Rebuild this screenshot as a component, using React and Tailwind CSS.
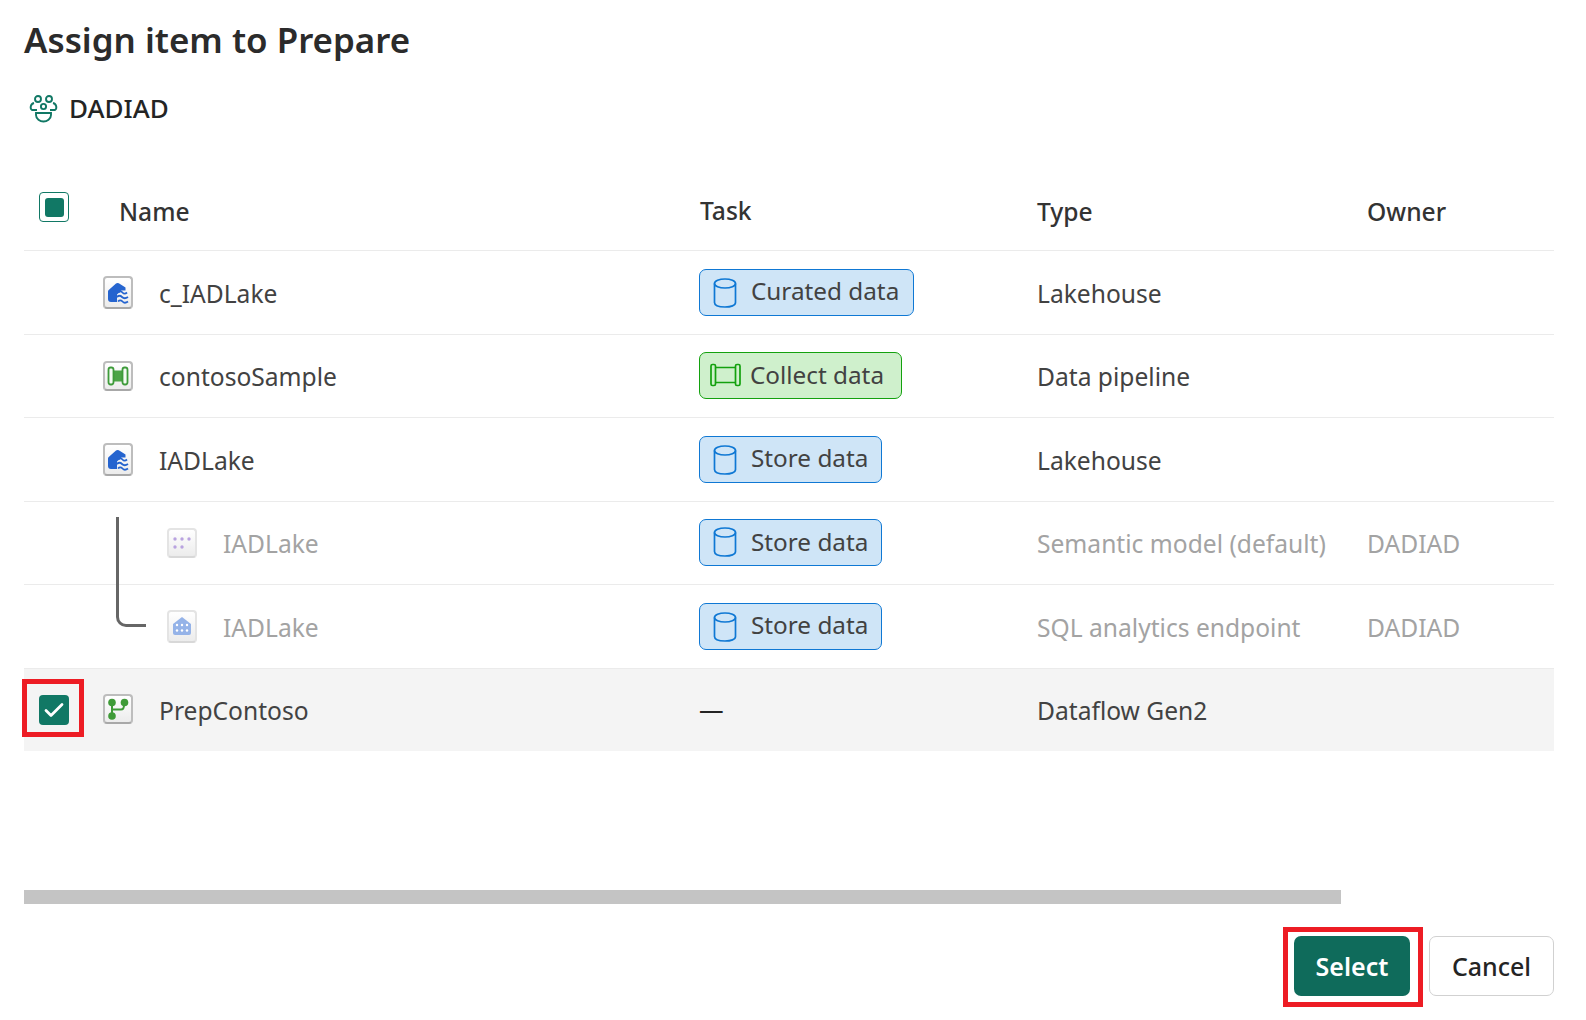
const font = "font-['Noto_Sans','Open_Sans',sans-serif]";

function IconBox({ children, faded, tall }) {
  return (
    <div className={`w-[30px] ${tall ? "h-[33px]" : "h-[30px]"} shrink-0 rounded-[4px] border-2 ${faded ? "border-[#e4e4e4] border-b-[#d8d8d8]" : "border-[#bdbdbd] border-b-[#a8a8a8]"} bg-gradient-to-b from-white to-[#ececec] flex items-center justify-center`}>
      {children}
    </div>
  );
}

const Lake = () => (
  <svg width="23" height="23" viewBox="0 0 23 23">
    <path d="M1 10.5 Q1 9.5 2 8.7 L9 2.5 Q10.3 1.5 11.8 2.3 L18.5 6.5 V9.5 H14.5 L10 13.5 V21 H4 Q1 21 1 18 Z" fill="#2564cf" />
    <path d="M11.5 11.5 q2 -2.4 4 0 q2 2.4 4.5 0 M10 16 q2.5 -2.4 5 0 q2.5 2.4 6 0 M11 20.5 q2.2 -2.4 4.5 0 q2.2 2.4 5.5 0" fill="none" stroke="#2564cf" strokeWidth="1.8" />
  </svg>
);
const Pipe = () => (
  <svg width="22" height="20" viewBox="0 0 22 20">
    <rect x="6" y="4.5" width="10" height="11" fill="#4ba446" />
    <rect x="1.5" y="1.5" width="5" height="17" rx="2.2" fill="#f4fbf3" stroke="#3e9b3a" strokeWidth="1.8" />
    <rect x="15.5" y="1.5" width="5" height="17" rx="2.2" fill="#f4fbf3" stroke="#3e9b3a" strokeWidth="1.8" />
  </svg>
);
const Dots = () => (
  <svg width="20" height="18" viewBox="0 0 20 18" fill="#b9a3e0">
    {[3, 10, 17].map((x) => <circle key={x} cx={x} cy="5" r="1.7" />)}
    {[3, 10].map((x) => <circle key={x} cx={x} cy="13" r="1.7" />)}
  </svg>
);
const Sql = () => (
  <svg width="22" height="22" viewBox="0 0 22 22">
    <path d="M2 9 L11 2 L20 9 V18 Q20 20 18 20 H4 Q2 20 2 18 Z" fill="#95b3e8" />
    <g fill="#ffffff">
      {[6, 11, 16].map((x) => <circle key={x} cx={x} cy="10" r="1.2" />)}
      {[6, 11, 16].map((x) => <circle key={x} cx={x} cy="15.5" r="1.2" />)}
    </g>
  </svg>
);
const Flow = () => (
  <svg width="24" height="24" viewBox="0 0 24 24" fill="#3f9b38" stroke="#3f9b38">
    <circle cx="6" cy="5.5" r="3.8" stroke="none" />
    <circle cx="18.5" cy="5.5" r="3.8" stroke="none" />
    <circle cx="6" cy="19" r="3.8" stroke="none" />
    <path d="M6 8 V17 M6 12.5 H15 Q18 12.5 18 8" fill="none" strokeWidth="2" />
  </svg>
);

const Cylinder = () => (
  <svg width="24" height="30" viewBox="0 0 24 30" fill="none" stroke="#0f78d4" strokeWidth="1.7" className="shrink-0">
    <ellipse cx="12" cy="5.5" rx="10.5" ry="4.5" />
    <path d="M1.5 5.5 V24.5 C1.5 27.5 6 29 12 29 S22.5 27.5 22.5 24.5 V5.5" />
  </svg>
);
const Roller = () => (
  <svg width="31" height="24" viewBox="0 0 31 24" fill="none" stroke="#13a10e" strokeWidth="1.7" className="shrink-0">
    <rect x="1" y="1.5" width="4.5" height="21" rx="1.5" />
    <rect x="25.5" y="1.5" width="4.5" height="21" rx="1.5" />
    <path d="M5.5 4.5 H25.5 M5.5 19.5 H25.5" />
  </svg>
);

function Pill({ label, green, w, tall }) {
  return (
    <div className={`${w} h-[47px] ${tall ? "" : "mt-[-2px]"} rounded-[7px] border flex items-center ${green ? "bg-[#cff0cc] border-[#13a10e] pl-[10px] gap-[9px]" : "bg-[#cfe5f7] border-[#0f78d4] pl-[13px] gap-[14px]"}`}>
      {green ? <Roller /> : <Cylinder />}
      <span className={`text-[24.3px] leading-none text-[#424242] ${tall ? "pb-[2px]" : ""}`}>{label}</span>
    </div>
  );
}

function Row({ h, icon, tall, name, child, task, type, owner, selected }) {
  const tone = child ? "text-[#a3a3a3]" : "text-[#424242]";
  return (
    <div className={`${h} flex items-center border-b ${selected ? "bg-[#f4f4f4] border-transparent" : "border-[#ebebeb]"}`}>
      <div className="w-[79px] shrink-0 flex pl-[15px] items-center">
        {selected && (
          <div className="w-[30px] h-[30px] rounded-[4px] bg-[#117865] flex items-center justify-center">
            <svg width="20" height="16" viewBox="0 0 20 16" fill="none" stroke="#ffffff" strokeWidth="2.8" strokeLinecap="round" strokeLinejoin="round"><path d="M2 8.5 L7 13.5 L18 2.5" /></svg>
          </div>
        )}
      </div>
      <div className={`w-[596px] shrink-0 flex items-center ${child ? "pl-[64px] gap-[26px]" : "gap-[26px]"}`}>
        <IconBox faded={child} tall={tall}>{icon}</IconBox>
        <span className={`text-[24.6px] pt-[3px] ${tone}`}>{name}</span>
      </div>
      <div className="w-[338px] shrink-0">{task}</div>
      <div className={`w-[330px] shrink-0 text-[24.6px] pt-[3px] ${tone}`}>{type}</div>
      <div className={`text-[24.6px] pt-[3px] ${tone}`}>{owner}</div>
    </div>
  );
}

export default function App() {
  return (
    <div className={`${font} w-[1586px] h-[1020px] bg-white pl-[24px] pr-[32px] overflow-hidden`}>
      <h1 className="h-[80px] flex items-center text-[34.9px] font-semibold text-[#2b2b2b]">Assign item to Prepare</h1>
      <div className="h-[58px] flex items-center gap-[11px] pl-[5px] pb-[2px]">
        <svg width="29" height="29" viewBox="0 0 29 29" fill="none" stroke="#117865" strokeWidth="1.9">
          <circle cx="9" cy="5" r="3" />
          <circle cx="20" cy="5" r="3" />
          <circle cx="14.5" cy="12.5" r="2.6" />
          <path d="M5 9 C1 10 1 15 3 16 H8 M24 9 C28 10 28 15 26 16 H21" />
          <path d="M7 19 H22 V21 C22 25 18 27.5 14.5 27.5 S7 25 7 21 Z" />
        </svg>
        <span className="text-[26px] font-medium text-[#242424]">DADIAD</span>
      </div>
      <div className="relative">
        <div className="h-[113px] flex items-center border-b border-[#ebebeb] pt-[36px]">
          <div className="w-[95px] shrink-0 flex pl-[15px] mt-[-10px]">
            <div className="w-[30px] h-[30px] rounded-[4px] border border-[#117865] flex items-center justify-center">
              <div className="w-[19px] h-[19px] rounded-[3px] bg-[#117865]" />
            </div>
          </div>
          <div className="w-[581px] shrink-0 text-[24.6px] font-medium text-[#333333]">Name</div>
          <div className="w-[337px] shrink-0 text-[24.6px] font-medium text-[#333333] mt-[-2px]">Task</div>
          <div className="w-[330px] shrink-0 text-[24.6px] font-medium text-[#333333]">Type</div>
          <div className="text-[24.6px] font-medium text-[#333333]">Owner</div>
        </div>
        <Row h="h-[84px]" icon={<Lake />} tall name="c_IADLake" task={<Pill tall label="Curated data" w="w-[215px]" />} type="Lakehouse" />
        <Row h="h-[83px]" icon={<Pipe />} name="contosoSample" task={<Pill label="Collect data" green w="w-[203px]" />} type="Data pipeline" />
        <Row h="h-[84px]" icon={<Lake />} tall name="IADLake" task={<Pill tall label="Store data" w="w-[183px]" />} type="Lakehouse" />
        <Row h="h-[83px]" icon={<Dots />} child name="IADLake" task={<Pill label="Store data" w="w-[183px]" />} type="Semantic model (default)" owner="DADIAD" />
        <Row h="h-[84px]" icon={<Sql />} child tall name="IADLake" task={<Pill tall label="Store data" w="w-[183px]" />} type="SQL analytics endpoint" owner="DADIAD" />
        <Row h="h-[82px]" icon={<Flow />} name="PrepContoso" selected task={<span className="block pt-[2px] text-[24.6px] text-[#242424]">—</span>} type="Dataflow Gen2" />

        <div className="absolute left-[92px] top-[379px] w-[30px] h-[110px] border-l-[3px] border-b-[3px] border-[#666666] rounded-bl-[10px]" />
        <div className="absolute left-[-2px] top-[541px] w-[62px] h-[58px] border-[5px] border-[#ed1c24]" />
      </div>
      <div className="mt-[139px] h-[14px] w-[1317px] bg-[#c4c4c4]" />
      <div className="mt-[32px] flex justify-end gap-[19px]">
        <div className="relative">
          <button className="w-[116px] h-[60px] rounded-[7px] bg-[#0f6b5b] text-white text-[25px] font-semibold pt-[1px]">Select</button>
          <div className="absolute left-[-11px] top-[-9px] w-[140px] h-[80px] border-[5px] border-[#ed1c24]" />
        </div>
        <button className="w-[125px] h-[60px] rounded-[7px] bg-white border border-[#d1d1d1] text-[#242424] text-[25px] font-medium pt-[1px]">Cancel</button>
      </div>
    </div>
  );
}
